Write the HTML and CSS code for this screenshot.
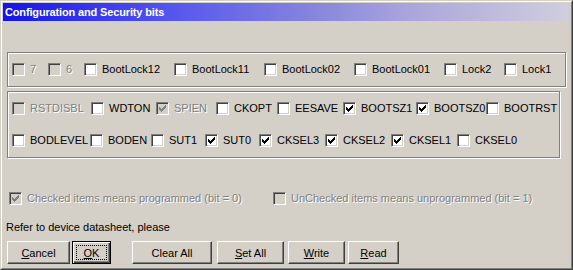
FILE: index.html
```html
<!DOCTYPE html>
<html>
<head>
<meta charset="utf-8">
<link rel="stylesheet" href="styles.css">
</head>
<body>
<div class="win">
  <div class="win-in">
    <div class="title">Configuration and Security bits</div>

    <div class="group g1">
      <div class="row">
        <div class="item w36 dis"><span class="cb"></span><span class="lbl">7</span></div>
        <div class="item w36 dis"><span class="cb"></span><span class="lbl">6</span></div>
        <div class="item w90"><span class="cb"></span><span class="lbl">BootLock12</span></div>
        <div class="item w90"><span class="cb"></span><span class="lbl">BootLock11</span></div>
        <div class="item w90"><span class="cb"></span><span class="lbl">BootLock02</span></div>
        <div class="item w90"><span class="cb"></span><span class="lbl">BootLock01</span></div>
        <div class="item w60"><span class="cb"></span><span class="lbl">Lock2</span></div>
        <div class="item w60"><span class="cb"></span><span class="lbl">Lock1</span></div>
      </div>
    </div>

    <div class="group g2">
      <div class="row">
        <div class="item w79 dis"><span class="cb"></span><span class="lbl">RSTDISBL</span></div>
        <div class="item w65"><span class="cb"></span><span class="lbl">WDTON</span></div>
        <div class="item w60 dis"><span class="cb"><svg class="chk" width="7" height="7" viewBox="0 0 7 7"><path d="M0 2h1v3h-1zM1 3h1v3h-1zM2 4h1v3h-1zM3 3h1v3h-1zM4 2h1v3h-1zM5 1h1v3h-1zM6 0h1v3h-1z"/></svg></span><span class="lbl">SPIEN</span></div>
        <div class="item w61"><span class="cb"></span><span class="lbl">CKOPT</span></div>
        <div class="item w66"><span class="cb"></span><span class="lbl">EESAVE</span></div>
        <div class="item w73"><span class="cb"><svg class="chk" width="7" height="7" viewBox="0 0 7 7"><path d="M0 2h1v3h-1zM1 3h1v3h-1zM2 4h1v3h-1zM3 3h1v3h-1zM4 2h1v3h-1zM5 1h1v3h-1zM6 0h1v3h-1z"/></svg></span><span class="lbl">BOOTSZ1</span></div>
        <div class="item w70"><span class="cb"><svg class="chk" width="7" height="7" viewBox="0 0 7 7"><path d="M0 2h1v3h-1zM1 3h1v3h-1zM2 4h1v3h-1zM3 3h1v3h-1zM4 2h1v3h-1zM5 1h1v3h-1zM6 0h1v3h-1z"/></svg></span><span class="lbl">BOOTSZ0</span></div>
        <div class="item"><span class="cb"></span><span class="lbl">BOOTRST</span></div>
      </div>
      <div class="row row2">
        <div class="item w78"><span class="cb"></span><span class="lbl">BODLEVEL</span></div>
        <div class="item w61"><span class="cb"></span><span class="lbl">BODEN</span></div>
        <div class="item w54"><span class="cb"></span><span class="lbl">SUT1</span></div>
        <div class="item w54"><span class="cb"><svg class="chk" width="7" height="7" viewBox="0 0 7 7"><path d="M0 2h1v3h-1zM1 3h1v3h-1zM2 4h1v3h-1zM3 3h1v3h-1zM4 2h1v3h-1zM5 1h1v3h-1zM6 0h1v3h-1z"/></svg></span><span class="lbl">SUT0</span></div>
        <div class="item w66"><span class="cb"><svg class="chk" width="7" height="7" viewBox="0 0 7 7"><path d="M0 2h1v3h-1zM1 3h1v3h-1zM2 4h1v3h-1zM3 3h1v3h-1zM4 2h1v3h-1zM5 1h1v3h-1zM6 0h1v3h-1z"/></svg></span><span class="lbl">CKSEL3</span></div>
        <div class="item w66"><span class="cb"><svg class="chk" width="7" height="7" viewBox="0 0 7 7"><path d="M0 2h1v3h-1zM1 3h1v3h-1zM2 4h1v3h-1zM3 3h1v3h-1zM4 2h1v3h-1zM5 1h1v3h-1zM6 0h1v3h-1z"/></svg></span><span class="lbl">CKSEL2</span></div>
        <div class="item w66"><span class="cb"><svg class="chk" width="7" height="7" viewBox="0 0 7 7"><path d="M0 2h1v3h-1zM1 3h1v3h-1zM2 4h1v3h-1zM3 3h1v3h-1zM4 2h1v3h-1zM5 1h1v3h-1zM6 0h1v3h-1z"/></svg></span><span class="lbl">CKSEL1</span></div>
        <div class="item"><span class="cb"></span><span class="lbl">CKSEL0</span></div>
      </div>
    </div>

    <div class="legend">
      <div class="item w264 dis"><span class="cb"><svg class="chk" width="7" height="7" viewBox="0 0 7 7"><path d="M0 2h1v3h-1zM1 3h1v3h-1zM2 4h1v3h-1zM3 3h1v3h-1zM4 2h1v3h-1zM5 1h1v3h-1zM6 0h1v3h-1z"/></svg></span><span class="lbl">Checked items means programmed (bit = 0)</span></div>
      <div class="item dis"><span class="cb"></span><span class="lbl">UnChecked items means unprogrammed (bit = 1)</span></div>
    </div>

    <div class="note">Refer to device datasheet, please</div>

    <div class="buttons">
      <div class="btn b-cancel"><span><u>C</u>ancel</span></div>
      <div class="btn b-ok def"><span class="focus"><u>O</u>K</span></div>
      <div class="btn b-clear"><span>Clear All</span></div>
      <div class="btn b-set"><span><u>S</u>et All</span></div>
      <div class="btn b-write"><span><u>W</u>rite</span></div>
      <div class="btn b-read"><span><u>R</u>ead</span></div>
    </div>
  </div>
</div>
</body>
</html>
```

FILE: styles.css
```css
* { box-sizing: border-box; }

html, body {
  margin: 0;
  padding: 0;
  background: #d4d0c8;
}

body {
  font-family: "Liberation Sans", Arial, sans-serif;
  font-size: 11px;
  color: #000;
}

.win {
  width: 573px;
  height: 270px;
  border: 1px solid;
  border-color: #d4d0c8 #404040 #404040 #d4d0c8;
  background: #d4d0c8;
}

.win-in {
  height: 100%;
  border: 1px solid;
  border-color: #ffffff #808080 #808080 #ffffff;
  padding: 1px;
  display: flex;
  flex-direction: column;
}

.title {
  height: 18px;
  line-height: 18px;
  padding-left: 2px;
  color: #fff;
  font-weight: bold;
  font-size: 11px;
  letter-spacing: -0.15px;
  background: linear-gradient(to right, #1414e6 0%, #3c3cf0 18%, #5a5aee 32%, #8686dc 55%, #aaa6dc 72%, #d0cede 100%);
  white-space: nowrap;
}

.group {
  margin-left: 4px;
  border: 1px solid #808080;
  box-shadow: inset 1px 1px #fff, 1px 1px #fff;
  padding: 10px 0 10px 4px;
}

.g1 {
  margin-top: 31px;
  width: 559px;
  height: 35px;
}

.g2 {
  margin-top: 4px;
  width: 553px;
  height: 67px;
}

.row {
  display: flex;
  height: 13px;
  align-items: center;
}

.row2 { margin-top: 19px; }

.item {
  display: flex;
  align-items: center;
  gap: 5px;
  height: 13px;
  flex: none;
  white-space: nowrap;
}

.w36 { width: 36px; }
.w54 { width: 54px; }
.w60 { width: 60px; }
.w61 { width: 61px; }
.w65 { width: 65px; }
.w66 { width: 66px; }
.w70 { width: 70px; }
.w73 { width: 73px; }
.w78 { width: 78px; }
.w79 { width: 79px; }
.w90 { width: 90px; }
.w264 { width: 264px; }

.cb {
  display: block;
  width: 13px;
  height: 13px;
  flex: none;
  border: 1px solid;
  border-color: #808080 #ffffff #ffffff #808080;
  box-shadow: inset 1px 1px #404040, inset -1px -1px #d4d0c8;
  background: #fff;
  padding: 2px;
}

.chk {
  display: block;
  fill: #000;
}

.lbl {
  line-height: 13px;
}

.dis .cb { background: #d4d0c8; }
.dis .chk { fill: #808080; }
.dis .lbl {
  color: #808080;
  text-shadow: 1px 1px #fff;
}

.legend {
  display: flex;
  margin-top: 34px;
  margin-left: 6px;
  height: 13px;
}

.note {
  margin-top: 16px;
  margin-left: 3px;
  line-height: 13px;
  height: 13px;
}

.buttons {
  display: flex;
  margin-top: 7px;
  height: 23px;
}

.btn {
  height: 23px;
  display: flex;
  align-items: center;
  justify-content: center;
  border: 1px solid;
  border-color: #fff #404040 #404040 #fff;
  box-shadow: inset -1px -1px #808080;
  background: #d4d0c8;
  flex: none;
}

.btn.def {
  border: 1px solid #000;
  box-shadow: inset 1px 1px #fff, inset -1px -1px #404040, inset -2px -2px #808080;
}

.focus {
  flex: 1;
  align-self: stretch;
  margin: 3px;
  border: 1px dotted #000;
  display: flex;
  align-items: center;
  justify-content: center;
}

.b-cancel { margin-left: 4px; width: 63px; }
.b-ok { margin-left: 2px; width: 39px; }
.b-clear { margin-left: 21px; width: 80px; }
.b-set { margin-left: 5px; width: 67px; }
.b-write { margin-left: 4px; width: 57px; }
.b-read { margin-left: 3px; width: 51px; }
```
